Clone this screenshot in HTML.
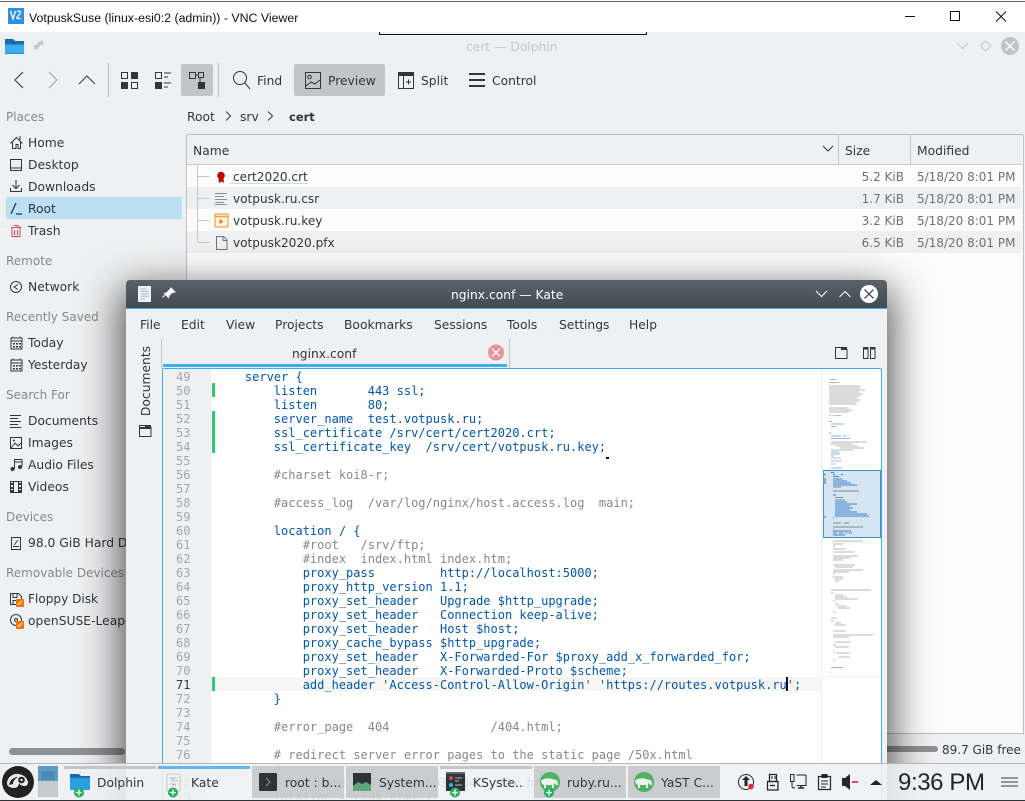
<!DOCTYPE html>
<html><head><meta charset="utf-8"><title>VNC Viewer</title>
<style>
html,body{margin:0;padding:0;width:1025px;height:801px;overflow:hidden;background:#eff0f1}
body{position:relative;font-family:"DejaVu Sans","Liberation Sans",sans-serif;font-size:12.3px;color:#31363b}
.a{position:absolute}
.t{position:absolute;white-space:nowrap;line-height:18px;height:18px;margin-top:1px}
.g{color:#7f8c8d;font-size:12px}
.s{color:#6e7173;font-size:12px}
.f{font-size:12.1px}
svg{position:absolute;left:0;top:0;overflow:visible}
pre{position:absolute;margin:0;font-family:"DejaVu Sans Mono","Liberation Mono",monospace;font-size:12px;line-height:14px;color:#0057ae}
pre i{font-style:normal;color:#898887}
</style></head><body>

<!-- VNC title bar -->
<div class="a" style="left:0;top:0;width:1025px;height:32px;background:#fff"></div>
<div class="a" style="left:0;top:1px;width:1025px;height:1px;background:#666"></div>
<div class="t" style="left:29px;top:8px;color:#111;font-family:'Liberation Sans',sans-serif;font-size:12.35px">VotpuskSuse (linux-esi0:2 (admin)) - VNC Viewer</div>
<div class="a" style="left:379px;top:32px;width:266px;height:2px;border:1px solid #111;border-top:0;box-sizing:content-box"></div>

<svg width="1025" height="801" fill="none">
 <rect x="8" y="8" width="16" height="16" fill="#2f8fe6"/>
 <path d="M10.500 11l2.500 8 2.500-8M17 12c1-1.500 4-1 3.500 1l-3.500 4.500v1h4" stroke="#fff" stroke-width="1.300"/>
 <path d="M905 16.500h10M950.500 11.500h9v9h-9zM996 11.500l10 10M1006 11.500l-10 10" stroke="#111" stroke-width="1"/>
 <!-- dolphin title -->
 <path d="M5 39h8l2 2h9v13H5z" fill="#1d8fd8"/><path d="M5 39h8l2 2h9v3H5z" fill="#176ea6"/><path d="M5 45h19v8H5z" fill="#3daee9"/>
 <path d="M42 41l1.500 3-3 .500-3 3-.500 2-3-3.500 2-.500 3-3zM36 47l-2.500 2.500" fill="#c4c7c9" stroke="#c4c7c9"/>
 <path d="M957 43l5.500 5.500 5.500-5.500" stroke="#c4c7c9"/><path d="M985.500 41l5 5-5 5-5-5z" stroke="#c4c7c9"/>
 <circle cx="1010" cy="46" r="9" fill="#bfc4c7"/><path d="M1005.500 41.500l9 9M1014.500 41.500l-9 9" stroke="#fff" stroke-width="1.300"/>
 <!-- toolbar -->
 <rect x="181" y="64" width="32" height="32" rx="2" fill="#c4c5c6"/>
 <rect x="294" y="64" width="91" height="32" rx="2" fill="#c4c5c6"/>
 <path d="M108.500 63v34M218.500 63v34" stroke="#bcbebf"/>
 <path d="M23 72l-8 8 8 8" stroke="#31363b"/><path d="M49 72l8 8-8 8" stroke="#9a9da0"/><path d="M79 84l8-8 8 8" stroke="#31363b"/>
 <path d="M121.500 72.500h6v6h-6zM131.500 82.500h6v6h-6z" stroke="#31363b"/><path d="M131 72h7v7h-7zM121 82h7v7h-7z" fill="#31363b"/>
 <path d="M155.500 72.500h6v6h-6z" stroke="#31363b"/><path d="M155 82h7v7h-7z" fill="#31363b"/><path d="M164 73h7M164 77h4M164 83h7M164 87h4" stroke="#31363b"/>
 <path d="M189.500 72.500h6v6h-6zM198.500 72.500h5v5h-5zM195 75h4M200 78v4" stroke="#31363b"/><path d="M198 82h7v7h-7z" fill="#31363b"/>
 <circle cx="240" cy="78" r="6.500" stroke="#31363b"/><path d="M245 83l5 6" stroke="#31363b"/>
 <path d="M305.500 72.500h15v16h-15z" stroke="#31363b"/><circle cx="309.500" cy="77" r="1.800" stroke="#31363b"/><path d="M306 86l5-4 4 2 5-4" stroke="#31363b"/>
 <path d="M398.500 72.500h15v16h-15z" stroke="#31363b"/><path d="M398 72h16v4h-16z" fill="#31363b"/><path d="M403.500 76v12M406 82h5M408.500 79.500v5" stroke="#31363b"/>
 <path d="M469 73h16v2h-16zM469 79h16v2h-16zM469 85h16v2h-16z" fill="#31363b"/>
</svg>
<div class="t" style="left:257px;top:71px">Find</div>
<div class="t" style="left:328px;top:71px">Preview</div>
<div class="t" style="left:421px;top:71px">Split</div>
<div class="t" style="left:492px;top:71px">Control</div>
<div class="t" style="left:466px;top:37px;color:#c4c7c9">cert — Dolphin</div>

<!-- Places -->
<div class="a" style="left:6px;top:197px;width:176px;height:22px;background:#bddff3"></div>
<div class="t g" style="left:6px;top:107px">Places</div>
<div class="t" style="left:28px;top:133px">Home</div>
<div class="t" style="left:28px;top:155px">Desktop</div>
<div class="t" style="left:28px;top:177px">Downloads</div>
<div class="t" style="left:28px;top:199px">Root</div>
<div class="t" style="left:28px;top:221px">Trash</div>
<div class="t g" style="left:6px;top:251px">Remote</div>
<div class="t" style="left:28px;top:277px">Network</div>
<div class="t g" style="left:6px;top:307px">Recently Saved</div>
<div class="t" style="left:28px;top:333px">Today</div>
<div class="t" style="left:28px;top:355px">Yesterday</div>
<div class="t g" style="left:6px;top:385px">Search For</div>
<div class="t" style="left:28px;top:411px">Documents</div>
<div class="t" style="left:28px;top:433px">Images</div>
<div class="t" style="left:28px;top:455px">Audio Files</div>
<div class="t" style="left:28px;top:477px">Videos</div>
<div class="t g" style="left:6px;top:507px">Devices</div>
<div class="t" style="left:28px;top:533px">98.0 GiB Hard Drive</div>
<div class="t g" style="left:6px;top:563px">Removable Devices</div>
<div class="t f" style="left:28px;top:589px">Floppy Disk</div>
<div class="t" style="left:28px;top:611px">openSUSE-Leap-15</div>

<svg width="1025" height="801" fill="none">
 <path d="M10.500 143.500l6-6 6 6M12.500 142v6.500h3.500v-4h2v4h2.500v-6.500M20 136v4" stroke="#31363b"/>
 <path d="M10.500 159.500h11v11h-11zM10.500 168h11" stroke="#31363b"/>
 <path d="M16 180v8M12.500 185l3.500 3.500 3.500-3.500M10.500 188v3.500h11v-3.500" stroke="#31363b"/>
 <path d="M11 214l5-11M16 214h6" stroke="#31363b" stroke-width="1.300"/>
 <path d="M11 227.500h10M12 227.500v9h8v-9M14 225.500h4v2M14.500 230v5M17.500 230v5" stroke="#da4453"/>
 <circle cx="16" cy="287" r="5.500" stroke="#31363b"/><path d="M18 284.500l-4 2.500 4 2.500" stroke="#31363b"/>
 <path d="M11 338h11v11H11zM11 341h11" stroke="#31363b"/><path d="M13 343h2v1.500h-2zM16 343h2v1.500h-2zM19 343h2v1.500h-2zM13 346h2v1.500h-2zM16 346h2v1.500h-2zM19 346h2v1.500h-2z" fill="#31363b"/><path d="M13 336.500v2M20 336.500v2" stroke="#31363b"/>
 <path d="M11 360h11v11H11zM11 363h11" stroke="#31363b"/><path d="M13 365h2v1.500h-2zM16 365h2v1.500h-2zM19 365h2v1.500h-2zM13 368h2v1.500h-2zM16 368h2v1.500h-2zM19 368h2v1.500h-2z" fill="#31363b"/><path d="M13 358.500v2M20 358.500v2" stroke="#31363b"/>
 <path d="M10 415.500h11M10 418.500h8M10 421.500h11M10 424.500h8M10 427.500h11" stroke="#31363b"/>
 <path d="M10.500 437.500h11v11h-11z" stroke="#31363b"/><path d="M11 448l4-5 3 3 3-3" stroke="#31363b"/><circle cx="14" cy="440.500" r="1" fill="#31363b"/>
 <path d="M14.500 469v-9.500h7.500v7" stroke="#31363b"/><path d="M14.500 462h7.500" stroke="#31363b"/><circle cx="12.500" cy="469" r="2" fill="#31363b"/><circle cx="20" cy="467" r="2" fill="#31363b"/>
 <path d="M10.500 481.500h11v11h-11zM13.500 481.500v11M18.500 481.500v11" stroke="#31363b"/><path d="M10 483h3v2h-3zM10 487h3v2h-3zM19 483h3v2h-3zM19 487h3v2h-3zM10 490h3v2h-3zM19 490h3v2h-3z" fill="#31363b"/>
 <path d="M11.500 537.500h9v12h-9zM13 546.500h6M18 540l-4 5" stroke="#31363b"/>
 <path d="M10.500 593.500h8l3 3v8h-11z" stroke="#31363b"/><path d="M13 593.500h4v4h-4zM13 604v-3.500h6v3.500" stroke="#31363b"/><rect x="16" y="599" width="8" height="8" fill="#f67400"/><path d="M18 605l4-4" stroke="#fff"/>
 <circle cx="16" cy="620" r="5.500" stroke="#31363b"/><circle cx="16" cy="620" r="1.500" stroke="#31363b"/><rect x="16" y="621" width="8" height="8" fill="#f67400"/><path d="M18 627l4-4" stroke="#fff"/>
 <!-- breadcrumbs -->
 <path d="M226 111.500l4.500 4.500-4.500 4.500M268 111.500l4.500 4.500-4.500 4.500" stroke="#31363b"/>
</svg>
<div class="t" style="left:187px;top:107px">Root</div>
<div class="t" style="left:240px;top:107px">srv</div>
<div class="t" style="left:289px;top:107px;font-weight:bold;font-size:11.500px">cert</div>

<!-- File view -->
<div class="a" style="left:186px;top:134px;width:836px;height:598px;border:1px solid #bcbebf;border-radius:2px 2px 0 0;background:#fcfcfc;box-sizing:content-box"></div>
<div class="a" style="left:187px;top:135px;width:835px;height:29px;background:#eff0f1;border-bottom:1px solid #c9cbcc"></div>
<div class="a" style="left:838px;top:135px;width:1px;height:29px;background:#c4c6c8"></div>
<div class="a" style="left:910px;top:135px;width:1px;height:29px;background:#c4c6c8"></div>
<div class="a" style="left:187px;top:187px;width:835px;height:22px;background:#eff0f1"></div>
<div class="a" style="left:187px;top:231px;width:835px;height:22px;background:#eff0f1"></div>
<div class="t" style="left:193px;top:141px">Name</div>
<div class="t" style="left:845px;top:141px">Size</div>
<div class="t" style="left:917px;top:141px">Modified</div>
<div class="t f" style="left:233px;top:167px">cert2020.crt</div>
<div class="a" style="left:229px;top:183px;width:79px;height:1px;background:#bddff3"></div>
<div class="t f" style="left:233px;top:189px">votpusk.ru.csr</div>
<div class="t f" style="left:233px;top:211px">votpusk.ru.key</div>
<div class="t f" style="left:233px;top:233px">votpusk2020.pfx</div>
<div class="t s" style="right:121px;top:167px">5.2 KiB</div>
<div class="t s" style="right:121px;top:189px">1.7 KiB</div>
<div class="t s" style="right:121px;top:211px">3.2 KiB</div>
<div class="t s" style="right:121px;top:233px">6.5 KiB</div>
<div class="t s" style="left:917px;top:167px">5/18/20 8:01 PM</div>
<div class="t s" style="left:917px;top:189px">5/18/20 8:01 PM</div>
<div class="t s" style="left:917px;top:211px">5/18/20 8:01 PM</div>
<div class="t s" style="left:917px;top:233px">5/18/20 8:01 PM</div>
<svg width="1025" height="801" fill="none">
 <path d="M823 146l5 5 5-5" stroke="#31363b"/>
 <path d="M197.500 165v77M197.500 176.500h12M197.500 198.500h12M197.500 220.500h12M197.500 242.500h12" stroke="#c4c6c8"/>
 <circle cx="221" cy="175.500" r="3.800" fill="#c30000"/><path d="M218.500 178h5l.5 5-2.500-1.500-2.500 1.500z" fill="#c30000"/>
 <path d="M215 193.500h12M215 196.500h9M215 199.500h12M215 202.500h9M215 204.500h12" stroke="#8a9095"/>
 <rect x="215" y="214" width="13" height="13" rx="1" stroke="#f9a13c" stroke-width="1.300" fill="#fff5e8"/><path d="M215 216.500h13" stroke="#f9a13c" stroke-width="1.500"/><path d="M219.500 219l4 2.500-4 2.500z" fill="#f67400"/>
 <path d="M216.500 236.500h7l3.500 3.500v9.500h-10.500zM223 236.500v4h4" stroke="#6d7478"/>
</svg>

<!-- Status bar capacity -->
<div class="a" style="left:9px;top:748px;width:116px;height:7px;border-radius:4px;background:#8e9092"></div>
<div class="a" style="left:887px;top:746px;width:51px;height:6px;border-radius:0 4px 4px 0;background:#8e9092"></div>
<div class="t s" style="left:942px;top:740px;color:#31363b">89.7 GiB free</div>

<!-- Kate window -->
<div class="a" style="left:126px;top:280px;width:761px;height:560px;background:#eff0f1;border-radius:4px 4px 0 0;box-shadow:0 14px 40px 6px rgba(0,0,0,.65)"></div>
<div class="a" style="left:126px;top:280px;width:761px;height:28px;background:linear-gradient(#59626a,#434b52);border-radius:4px 4px 0 0"></div>
<div class="a" style="left:126px;top:308px;width:761px;height:1px;background:#3daee9"></div>
<div class="t" style="left:451px;top:285px;color:#fff">nginx.conf — Kate</div>
<div class="t" style="left:140px;top:315px">File</div>
<div class="t" style="left:181px;top:315px">Edit</div>
<div class="t" style="left:226px;top:315px">View</div>
<div class="t" style="left:275px;top:315px">Projects</div>
<div class="t" style="left:344px;top:315px">Bookmarks</div>
<div class="t" style="left:434px;top:315px">Sessions</div>
<div class="t" style="left:507px;top:315px">Tools</div>
<div class="t" style="left:559px;top:315px">Settings</div>
<div class="t" style="left:629px;top:315px">Help</div>
<div class="t" style="left:146px;top:381px;margin:0;transform:translate(-50%,-50%) rotate(-90deg);transform-origin:center;height:auto">Documents</div>
<div class="a" style="left:161px;top:339px;width:1px;height:29px;background:#c4c6c8"></div>
<div class="a" style="left:509px;top:339px;width:1px;height:29px;background:#c4c6c8"></div>
<div class="a" style="left:163px;top:364px;width:344px;height:3px;background:#3daee9"></div>
<div class="t" style="left:292px;top:344px">nginx.conf</div>

<!-- Editor -->
<div class="a" style="left:162px;top:368px;width:720px;height:440px;box-sizing:border-box;border:1px solid #3daee9;border-radius:2px 2px 0 0;background:#fff"></div>
<div class="a" style="left:163px;top:369px;width:48px;height:432px;background:#eff0f1"></div>
<div class="a" style="left:211px;top:677px;width:610px;height:14px;background:#f7f6f4"></div>
<div class="a" style="left:212px;top:383px;width:3px;height:14px;background:#2ecc71"></div>
<div class="a" style="left:212px;top:411px;width:3px;height:42px;background:#2ecc71"></div>
<div class="a" style="left:212px;top:677px;width:3px;height:14px;background:#2ecc71"></div>
<div class="a" style="left:821px;top:369px;width:1px;height:432px;background:#eef1f3"></div>
<pre style="left:163px;top:370px;width:27.500px;text-align:right;color:#a4a6a8">49
50
51
52
53
54
55
56
57
58
59
60
61
62
63
64
65
66
67
68
69
70
<span style="color:#31363b">71</span>
72
73
74
75
76
77
78
79</pre>
<pre style="left:216px;top:370px">    server {
        listen       443 ssl;
        listen       80;
        server_name  test.votpusk.ru;
        ssl_certificate /srv/cert/cert2020.crt;
        ssl_certificate_key  /srv/cert/votpusk.ru.key;

        <i>#charset koi8-r;</i>

        <i>#access_log  /var/log/nginx/host.access.log  main;</i>

        location / {
            <i>#root   /srv/ftp;</i>
            <i>#index  index.html index.htm;</i>
            proxy_pass         http://localhost:5000;
            proxy_http_version 1.1;
            proxy_set_header   Upgrade $http_upgrade;
            proxy_set_header   Connection keep-alive;
            proxy_set_header   Host $host;
            proxy_cache_bypass $http_upgrade;
            proxy_set_header   X-Forwarded-For $proxy_add_x_forwarded_for;
            proxy_set_header   X-Forwarded-Proto $scheme;
            add_header 'Access-Control-Allow-Origin' 'https://routes.votpusk.ru';
        }

        <i>#error_page  404              /404.html;</i>

        <i># redirect server error pages to the static page /50x.html</i>
        <i>#</i>
        error_page   500 502 503 504  /50x.html;
        location = /50x.html {</pre>
<div class="a" style="left:786px;top:677px;width:2px;height:14px;background:#111"></div>
<div class="a" style="left:606px;top:457px;width:3px;height:2px;background:#111"></div>

<!-- minimap -->
<div class="a" style="left:823px;top:470px;width:58px;height:68px;box-sizing:border-box;border:1px solid #3d8fd0;background:#d5e6f2"></div>
<div class="a" style="left:822px;top:676px;width:59px;height:1px;background:#e8f1f6"></div>
<svg width="1025" height="801" fill="none" stroke-width="1">
 <path d="M829 379.500h7M829 382.500h10M829 386h31M829 388h31M829 390h36M829 392h30M829 394h34M829 396h31M829 398h28M829 400h31M829 402h28M829 404h27M829 408h20M829 410h24M829 412h20M829 415.500h2M833 415.500h8M831 442h36M831 444h22M836 446h22M840 448h24M831 450h22M831 458h10M831 461h11M831 464h5" stroke="#b8b8b8"/>
 <path d="M829 421.500h3M831 424h13M831 426.500h5M829 433h2M831 436h10M843 436h3M831 438.500h19M831 452h8M831 454h9M831 456h3M831 468h11" stroke="#8fb6df"/>
 <path d="M831 472.500h3M833 474.500h2M841 474.500h2M833 476.500h6M833 479h9M833 481h14M833 483h18M833 485h24" stroke="#3a82c8"/>
 <path d="M833 487h8M833 491h26M835 497.500h8M835 500h10" stroke="#7f8b96"/>
 <path d="M833 495h3M835 502h12M835 504h22M835 506h15M835 508h18M835 510h15M835 512h22M835 514h32M835 516h34M833 518h1" stroke="#3a82c8"/>
 <path d="M833 523h8M844 523h5M833 527h30M833 529h1" stroke="#7f8b96"/>
 <path d="M833 531h18M833 533h4M840 533h2M845 533h2M849 533h3M833 535h12" stroke="#3a82c8"/>
 <path d="M839 533h4" stroke="#c0605f"/>
 <path d="M823 474.500h3M823 479h3M823 481h3M823 483h3M823 517h3" stroke="#5faa8c" stroke-width="1.500"/>
 <path d="M833 541h30M833 544h10M833 546h2M833 549h12M833 552h22M833 556h25M833 558h18M833 560h10M833 565h22M835 567h18M833 570h30M833 572h16M833 574h2M833 577h10M835 579h8M835 581h4M831 590h40M831 593h2M835 595h8M835 597h12M835 599h23M833 601h2M835 604h3M837 606h9M838 608h12M833 612h2M831 618h6M831 621h3M835 623h6M835 625h11M833 631h5M835 631h11M833 637h2M835 637h14M833 635h40M835 642h16M833 645h3M835 647h14M833 652h2M836 653h14M838 657h12M833 660h2" stroke="#b8b8b8"/>
 <path d="M831 667.500h12M830 672h1" stroke="#8fb6df"/>
</svg>

<svg width="1025" height="801" fill="none">
 <rect x="138" y="286" width="13" height="16" fill="#f0f1ee"/><path d="M140 289h6M140 291.500h9M141 294h8M141 296.500h7M140 299h5" stroke="#9bd3e0" stroke-width="1.200"/><path d="M142 291h3M143 296h3" stroke="#e8a8c8"/>
 <path d="M171 288l4 4-3 .500-3 3-.500 2-4-4 2-.500 3-3zM165 295l-2.500 2.500" fill="#fff" stroke="#fff"/>
 <path d="M816 291l5.500 5.500 5.500-5.500M839.500 297l5.500-5.500 5.500 5.500" stroke="#fff"/>
 <circle cx="869" cy="294" r="9" fill="#fff"/><path d="M864.500 289.500l9 9M873.500 289.500l-9 9" stroke="#4d5157" stroke-width="1.300"/>
 <circle cx="496" cy="352.500" r="8" fill="#e8929c"/><path d="M492 348.500l8 8M500 348.500l-8 8" stroke="#fff" stroke-width="1.300"/>
 <path d="M835.500 358.500v-11h6v2h5.500v9z" stroke="#31363b"/><path d="M841 347h6v2.500h-6z" fill="#31363b"/>
 <path d="M863.500 347.500h4.500v11h-4.500zM870.500 347.500h4.500v11h-4.500z" stroke="#31363b"/><path d="M863 347h5v2.500h-5zM870 347h5v2.500h-5z" fill="#31363b"/>
 <path d="M139.500 436.500v-11h6v2h5.500v9z" stroke="#31363b"/><path d="M145 425h6v3h-6zM139 427h12v2h-12z" fill="#31363b"/>
</svg>

<!-- Taskbar -->
<div class="a" style="left:0;top:763px;width:1025px;height:37px;background:rgba(239,240,241,.88);border-top:1px solid #b5b7b8;box-sizing:border-box"></div>
<div class="a" style="left:0;top:800px;width:1025px;height:1px;background:#2f3235"></div>
<div class="a" style="left:38px;top:766px;width:20px;height:15px;background:#5c9ec7"></div>
<div class="a" style="left:38px;top:781px;width:20px;height:16px;background:#c5cbcc"></div>
<div class="a" style="left:41px;top:771px;width:14px;height:9px;background:#4a8ab3"></div>
<div class="a" style="left:64px;top:766px;width:92px;height:3px;background:#c3c5c6"></div>
<div class="a" style="left:158px;top:766px;width:92px;height:3px;background:#5db8ec"></div>
<div class="a" style="left:252px;top:766px;width:92px;height:32px;background:rgba(190,191,192,.75)"></div>
<div class="a" style="left:346px;top:766px;width:92px;height:32px;background:rgba(190,191,192,.75)"></div>
<div class="a" style="left:440px;top:766px;width:92px;height:3px;background:#c3c5c6"></div>
<div class="a" style="left:534px;top:766px;width:92px;height:32px;background:rgba(190,191,192,.75)"></div>
<div class="a" style="left:628px;top:766px;width:92px;height:32px;background:rgba(190,191,192,.75)"></div>
<div class="t" style="left:97px;top:773px">Dolphin</div>
<div class="t" style="left:191px;top:773px">Kate</div>
<div class="t" style="left:285px;top:773px">root : b...</div>
<div class="t" style="left:379px;top:773px">System...</div>
<div class="t" style="left:473px;top:773px">KSyste..</div>
<div class="t" style="left:567px;top:773px">ruby.ru...</div>
<div class="t" style="left:661px;top:773px">YaST C...</div>
<div class="t" style="left:898px;top:770px;font-family:'Liberation Sans',sans-serif;font-size:24px;line-height:24px;height:24px;letter-spacing:-.4px;color:#232629">9:36 PM</div>
<svg width="1025" height="801" fill="none">
 <circle cx="18" cy="782" r="16" fill="#222"/>
 <path d="M7 784c0-7 6-11 12-10 5 1 8 4 9 8 0 2-1 4-3 4-3 0-5-1-6-3 0 3-2 5-5 5-3 0-6-1-7-4z" fill="#e8e8e8"/>
 <path d="M9 785c1-5 5-8 9-8-3 2-5 4-5 7z" fill="#222"/>
 <circle cx="21.500" cy="780" r="3.300" fill="#222"/><circle cx="21.500" cy="780" r="1.200" fill="#e8e8e8"/>
 <path d="M70 774h9l2 2h9v3H70z" fill="#176ea6"/><path d="M70 778h20v12H70z" fill="#2a9fe4"/>
 <rect x="167" y="774" width="13" height="17" fill="#f2f3f0" stroke="#c9c9c9"/><path d="M169 778h8M170 781h8M169 784h7" stroke="#9bd3e0"/><path d="M171 779h4M172 785h4" stroke="#e8a8c8"/>
 <rect x="259" y="773" width="18" height="18" rx="1" fill="#2d3337"/><path d="M266 778l4 4-4 4" stroke="#8b9195"/>
 <rect x="353" y="773" width="18" height="18" fill="#2d3337"/><path d="M353 786l5-4 4 2 4-2 5 3v6h-18z" fill="#5aa878"/>
 <rect x="446" y="772" width="19" height="19" fill="#2d3337"/><path d="M446 772h19v2h-19z" fill="#5c6670"/><circle cx="451" cy="778" r="2" fill="#da4453"/><circle cx="451" cy="785" r="2" fill="#3daee9"/><path d="M455 778h7M455 785h7M455 781h4" stroke="#b0b4b8"/>
 <circle cx="550" cy="782" r="10" fill="#4cb264"/><path d="M541 781c2-3 8-3 11-2l4 1c2 1 2 3 2 5h-2l-1-2-1 1v4h-2v-3h-6v3h-2v-3l-2-1z" fill="#eef5ee"/>
 <circle cx="644" cy="782" r="10" fill="#4cb264"/><path d="M635 781c2-3 8-3 11-2l4 1c2 1 2 3 2 5h-2l-1-2-1 1v4h-2v-3h-6v3h-2v-3l-2-1z" fill="#eef5ee"/>
 <g fill="#27ae60"><circle cx="79" cy="792.500" r="5"/><circle cx="173" cy="792.500" r="5"/><circle cx="455" cy="792.500" r="5"/><circle cx="549" cy="792.500" r="5"/></g>
 <path d="M76 792.500h6M79 789.500v6M170 792.500h6M173 789.500v6M452 792.500h6M455 789.500v6M546 792.500h6M549 789.500v6" stroke="#fff" stroke-width="1.300"/>
 <!-- tray -->
 <circle cx="746" cy="782" r="7.500" stroke="#232629"/><path d="M746 776l-4 4h2.500v6h3v-6h2.500z" fill="#232629"/><circle cx="751" cy="786.500" r="2.800" fill="#da2c43"/>
 <path d="M769.500 774.500h7v7h-7z" stroke="#232629" stroke-width="1.300"/><path d="M772 776v3M775 776v3" stroke="#232629"/><path d="M767.500 781.500h10.500v8.500h-10.500z" stroke="#232629" stroke-width="1.300"/><path d="M770 785.500h5" stroke="#232629" stroke-width="1.300"/>
 <path d="M790.500 774.500h3.500v7h-3.500zM792 782v4c0 2 1 2 3 2" stroke="#232629"/><path d="M796.500 775h9.500v10.500h-9.500" stroke="#232629"/><path d="M798 788h6M801 785v3" stroke="#232629" stroke-width="1.500"/>
 <path d="M818.500 776.500h12v13h-12z" stroke="#232629" stroke-width="1.200"/><path d="M821.500 774h6v4h-6z" fill="#232629"/><path d="M821 781h7M821 784h7M821 787h5" stroke="#232629"/>
 <path d="M842 778h3l5-4v16l-5-4h-3z" fill="#232629"/><path d="M852 782h6" stroke="#da2c43" stroke-width="1.700"/>
 <path d="M870 785l6-5 6 5z" fill="#232629"/>
 <path d="M1001 778h17M1001 782h17M1001 786h17" stroke="#75787a" stroke-width="1.500"/>
</svg>
</body></html>
